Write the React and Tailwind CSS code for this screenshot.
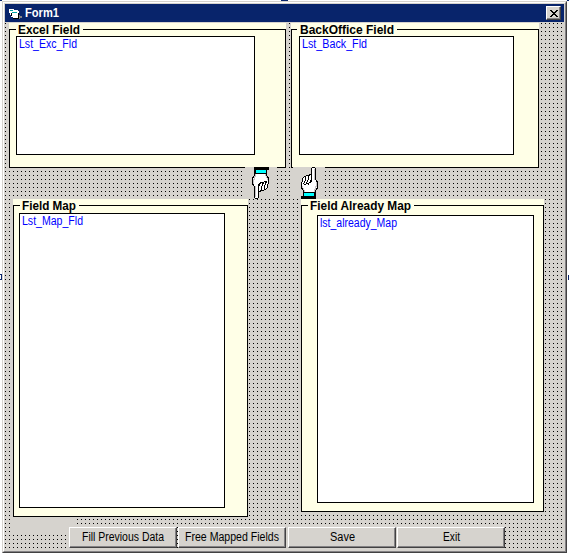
import React from "react";

function Label({ text, width, className }) {
  return (
    <svg width={width} height="13" className="block shrink-0 overflow-visible">
      <text x="0" y="11" textLength={width} lengthAdjust="spacingAndGlyphs" className={className}>
        {text}
      </text>
    </svg>
  );
}

function Group({ title, titleWidth, item, itemWidth, className, titleClass, listClass }) {
  return (
    <section className={`relative bg-[#ffffe7] pt-[6px] ${className}`}>
      <div className="h-full border border-black">
        <div className={`absolute top-0 bg-[#ffffe7] ${titleClass}`}>
          <Label text={title} width={titleWidth} className="fill-black text-[12px] font-bold" />
        </div>
        <div className={`border border-black bg-white pl-[2px] ${listClass}`}>
          <Label text={item} width={itemWidth} className="fill-[#0000ff] text-[12px]" />
        </div>
      </div>
    </section>
  );
}

function Hand({ className = "" }) {
  return (
    <div className={`h-8 w-8 bg-[#d6d3ce] ${className}`}>
      <svg width="32" height="32" viewBox="0 0 32 32" className="block" shapeRendering="crispEdges">
        <path
          d="M10.5 25.5V23.5L9.5 22.5L8.5 20.5V15.5L9.5 14.5V11.5L11.5 9.5H12.5L13.5 8.5H15.5L17.5 7.5H18.5V1.5L19.5 .5H21.5L22.5 1.5V12.5L23.5 13.5L24.5 15.5V20.5L23.5 22.5L22.5 23.5V25.5Z"
          fill="#fff"
          stroke="#000"
        />
        <path d="M21.5 2V13M23.5 15V20M22.5 19V23M21.5 22V25M9.5 19V21M10.5 21V23M11.5 23V25" fill="none" stroke="#c6c3c6" />
        <path d="M18.5 8V12.5L16.5 16.5M15.5 9V12L13.5 16.5M12.5 10V13L10.5 17.5M10.5 17.5H12.5L13.5 16.5H15.5V17.5M18.5 12.5V15" fill="none" stroke="#000" />
        <rect x="10" y="26" width="13" height="3" fill="#000" />
        <rect x="11" y="26" width="10" height="3" fill="#00ffff" />
        <rect x="8" y="29" width="15" height="3" fill="#000" />
      </svg>
    </div>
  );
}

function Button({ label, width, className = "" }) {
  return (
    <button
      className={`flex h-[21px] w-[108px] shrink-0 items-start justify-center border border-t-white border-r-[#424142] border-b-[#424142] border-l-white bg-[#d6d3ce] pt-[2px] shadow-[inset_-1px_-1px_0_#848284] ${className}`}
    >
      <Label text={label} width={width} className="fill-black text-[12px]" />
    </button>
  );
}

function FormIcon() {
  return (
    <svg width="13" height="12" viewBox="0 0 13 12" className="block" shapeRendering="crispEdges">
      <path d="M0 1H5V2H9V3H10V10H4V9H2V7H1V5H0Z" fill="#fff" />
      <path d="M1 2H4V3H1ZM3 4H8V5H3Z" fill="#00a5a5" />
      <path d="M2 5H3V8H2ZM9 5H10V11H4V10H9Z" fill="#000" />
      <path d="M10 7H11V8H13V10H11V11H10Z" fill="#848284" />
    </svg>
  );
}

export default function App() {
  return (
    <div className="relative h-[554px] w-[569px] overflow-hidden bg-white pt-px pl-[2px] font-['Liberation_Sans',Arial,sans-serif]">
      <div className="absolute top-0 left-0 h-px w-[2px] bg-[#08246b]" />
      <div className="absolute top-0 left-[281px] h-px w-[7px] bg-[#08246b]" />
      <div className="absolute top-0 right-0 h-px w-[2px] bg-[#08246b]" />
      <div className="absolute top-[274px] left-0 h-[6px] w-[2px] border border-l-0 border-[#08246b]" />
      <div className="absolute top-[275px] right-0 h-[5px] w-px bg-[#08246b]" />

      <main className="h-[552px] w-[565px] border border-t-[#d6d3ce] border-r-[#424142] border-b-[#424142] border-l-[#d6d3ce] bg-[#d6d3ce]">
        <div className="h-full border border-t-white border-r-[#848284] border-b-[#848284] border-l-white pt-px pl-px">
          <header className="flex h-[18px] w-[559px] bg-[#08246b]">
            <div className="mt-[4px] ml-[4px] w-[16px]">
              <FormIcon />
            </div>
            <div className="mt-[2px]">
              <Label text="Form1" width={34} className="fill-white text-[12px] font-bold" />
            </div>
            <button className="mt-[2px] mr-[3px] ml-auto flex h-[14px] w-[15px] items-center justify-center border border-t-white border-r-[#424142] border-b-[#424142] border-l-white bg-[#d6d3ce] shadow-[inset_-1px_-1px_0_#848284]">
              <svg width="8" height="7" viewBox="0 0 8 7" shapeRendering="crispEdges" className="block">
                <path d="M0 0H2V1H3V2H5V1H6V0H8V1H7V2H6V3H5V4H6V5H7V6H8V7H6V6H5V5H3V6H2V7H0V6H1V5H2V4H3V3H2V2H1V1H0Z" />
              </svg>
            </button>
          </header>

          <div className="mt-px h-[528px] w-[559px] bg-[linear-gradient(transparent_1px,#d6d3ce_1px),linear-gradient(90deg,#000_1px,#d6d3ce_1px)] bg-[size:4px_4px]">
            <div className="flex pl-[4px]">
              <Group
                title="Excel Field"
                titleWidth={62}
                item="Lst_Exc_Fld"
                itemWidth={58}
                className="h-[145px] w-[277px]"
                titleClass="left-[7px] pl-[2px] pr-[3px]"
                listClass="mt-[6px] ml-[6px] h-[119px] w-[239px]"
              />
              <Group
                title="BackOffice Field"
                titleWidth={94}
                item="Lst_Back_Fld"
                itemWidth={65}
                className="ml-[5px] h-[145px] w-[248px]"
                titleClass="left-[6px] pl-[3px] pr-[3px]"
                listClass="mt-[6px] ml-[7px] h-[119px] w-[215px]"
              />
            </div>

            <div className="relative -mt-px flex gap-4 pl-[240px]">
              <Hand className="rotate-180" />
              <Hand />
            </div>

            <div className="flex items-start pl-[8px]">
              <Group
                title="Field Map"
                titleWidth={54}
                item="Lst_Map_Fld"
                itemWidth={61}
                className="h-[318px] w-[235px]"
                titleClass="left-[7px] pl-[2px] pr-[3px]"
                listClass="mt-[7px] ml-[5px] h-[295px] w-[206px]"
              />
              <Group
                title="Field Already Map"
                titleWidth={101}
                item="lst_already_Map"
                itemWidth={77}
                className="ml-[53px] h-[313px] w-[243px]"
                titleClass="left-[7px] pl-[2px] pr-[3px]"
                listClass="mt-[9px] ml-[15px] h-[288px] w-[217px]"
              />
            </div>

            <div className="ml-[8px] h-4 w-16 bg-[#d6d3ce]" />
            <div className="relative -mt-[6px] flex pl-[64px]">
              <Button label="Fill Previous Data" width={82} />
              <Button label="Free Mapped Fields" width={94} className="ml-px" />
              <Button label="Save" width={25} className="ml-[2px]" />
              <Button label="Exit" width={17} className="ml-px" />
            </div>
          </div>
        </div>
      </main>
    </div>
  );
}
